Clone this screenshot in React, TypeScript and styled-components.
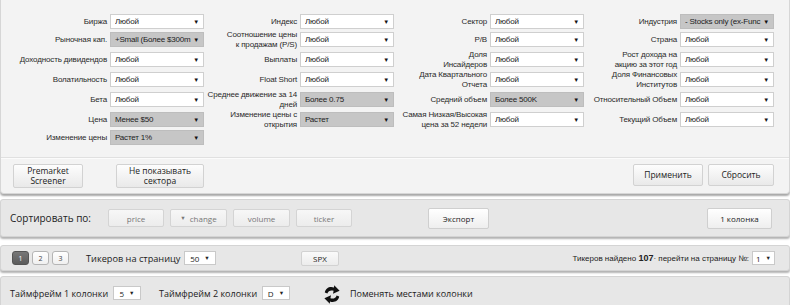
import React from "react";
import styled, { createGlobalStyle, css } from "styled-components";

const GlobalStyle = createGlobalStyle`
  html, body { margin: 0; padding: 0; background: #ffffff; }
  body { font-family: "Liberation Sans", Arial, sans-serif; color: #222; }
  * { box-sizing: border-box; }
`;

const Page = styled.div`
  width: 790px;
  display: flex;
  flex-direction: column;
`;

/* ---------- Filter panel ---------- */
const FilterPanel = styled.div`
  height: 194px;
  background: #f3f3f3;
  border: 1px solid #d6d6d6;
  border-top: none;
  border-radius: 0 0 4px 4px;
  box-shadow: 0 2px 2px rgba(0, 0, 0, 0.35);
  padding-top: 14px;
  display: flex;
  flex-direction: column;
`;

const FilterGrid = styled.div`
  display: grid;
  grid-template-columns: repeat(4, 90px 94px);
  column-gap: 3px;
  row-gap: 1px;
  align-items: center;
  padding-left: 16px;
`;

const Label = styled.div`
  display: flex;
  justify-content: flex-end;
  font-size: 8px;
  letter-spacing: -0.15px;
  line-height: 9.5px;
  color: #2a2a2a;
  text-align: right;
  white-space: nowrap;
`;

const Select = styled.div<{ $active?: boolean }>`
  height: 15px;
  border: 1px solid ${(p) => (p.$active ? "#bdbdbd" : "#cfcfcf")};
  background: ${(p) => (p.$active ? "#c6c6c6" : "#ffffff")};
  font-size: 8px;
  letter-spacing: -0.2px;
  color: #222;
  display: flex;
  align-items: center;
  padding: 0 4px 0 4px;
  overflow: hidden;
  white-space: nowrap;
`;

const SelectText = styled.span`
  overflow: hidden;
  text-overflow: clip;
  flex: 1;
  min-width: 0;
`;

const Arrow = styled.span`
  font-size: 6px;
  color: #111;
  margin-left: 2px;
  flex: none;
`;

const Divider = styled.div`
  margin: 12px 0 0;
  height: 2px;
  border-top: 1px solid #e0e0e0;
  border-bottom: 1px solid #fbfbfb;
`;

const ButtonRow = styled.div`
  display: flex;
  justify-content: space-between;
  padding: 5px 15px 0 12px;
`;

const ButtonGroup = styled.div<{ $gap: number }>`
  display: flex;
  gap: ${(p) => p.$gap}px;
  align-items: flex-start;
`;

const PanelButton = styled.button<{ $w: number; $h?: number }>`
  width: ${(p) => p.$w}px;
  height: ${(p) => p.$h ?? 24}px;
  border: 1px solid #d2d2d2;
  border-radius: 2px;
  background: linear-gradient(#fdfdfd, #e9e9e9);
  font-family: "Open Sans", "Liberation Sans", sans-serif;
  font-size: 8.5px;
  line-height: 10px;
  color: #222;
  padding: 0;
  cursor: pointer;
`;

/* ---------- Bars ---------- */
const Bar = styled.div<{ $h: number; $mt: number }>`
  margin-top: ${(p) => p.$mt}px;
  height: ${(p) => p.$h}px;
  background: #e7e7e7;
  border: 1px solid #d4d4d4;
  border-radius: 3px;
  box-shadow: 0 2px 2px rgba(0, 0, 0, 0.3);
  display: flex;
  align-items: center;
  font-family: "Open Sans", "Liberation Sans", sans-serif;
  color: #222;
`;

const BarText = styled.span<{ $size?: number; $ml?: number; $w?: number }>`
  font-size: ${(p) => p.$size ?? 9}px;
  margin-left: ${(p) => p.$ml ?? 0}px;
  ${(p) => p.$w !== undefined && css`width: ${p.$w}px; flex: none;`}
  white-space: nowrap;
`;

const SortButton = styled.button<{ $w: number; $strong?: boolean; $ml?: number; $mr?: number }>`
  width: ${(p) => p.$w}px;
  height: 18px;
  margin-left: ${(p) => p.$ml ?? 0}px;
  margin-right: ${(p) => p.$mr ?? 0}px;
  border: 1px solid #d4d4d4;
  border-radius: 2px;
  background: linear-gradient(#f7f7f7, #ececec);
  font-family: "Open Sans", "Liberation Sans", sans-serif;
  font-size: 8px;
  color: ${(p) => (p.$strong ? "#222" : "#777")};
  padding: 0;
  display: flex;
  align-items: center;
  justify-content: center;
  gap: 4px;
  ${(p) =>
    p.$strong &&
    css`
      height: 21px;
      background: linear-gradient(#ffffff, #eeeeee);
      border-color: #cfcfcf;
    `}
`;

const SortGroup = styled.div`
  display: flex;
  gap: 6px;
`;

const PageBtn = styled.span<{ $active?: boolean }>`
  width: 17px;
  height: 14px;
  border: 1px solid ${(p) => (p.$active ? "#555" : "#b5b5b5")};
  border-radius: 3px;
  background: ${(p) => (p.$active ? "linear-gradient(#777, #5c5c5c)" : "linear-gradient(#ffffff, #f0f0f0)")};
  color: ${(p) => (p.$active ? "#fff" : "#444")};
  font-size: 7px;
  display: flex;
  align-items: center;
  justify-content: center;
`;

const PageGroup = styled.div`
  display: flex;
  gap: 3px;
  margin-left: 11px;
`;

const MiniSelect = styled.span<{ $w: number; $ml?: number; $mr?: number }>`
  width: ${(p) => p.$w}px;
  height: 14px;
  margin-left: ${(p) => p.$ml ?? 2}px;
  margin-right: ${(p) => p.$mr ?? 0}px;
  border: 1px solid #c9c9c9;
  background: #fff;
  font-size: 8px;
  display: inline-flex;
  align-items: center;
  justify-content: center;
  gap: 5px;
  color: #222;
  flex: none;
`;

const MiniArrow = styled.span`
  font-size: 5.5px;
`;

const SmallButton = styled.span<{ $w: number; $ml: number }>`
  width: ${(p) => p.$w}px;
  height: 15px;
  margin-left: ${(p) => p.$ml}px;
  border: 1px solid #d2d2d2;
  border-radius: 2px;
  background: linear-gradient(#fafafa, #ececec);
  font-size: 8px;
  display: flex;
  align-items: center;
  justify-content: center;
  color: #222;
`;

const Spacer = styled.div`
  flex: 1;
`;

const FoundText = styled.span`
  font-family: "Liberation Sans", Arial, sans-serif;
  font-size: 8px;
  white-space: nowrap;
  color: #222;
  b { font-size: 9px; }
`;

const SwapIcon = styled.svg`
  width: 16px;
  height: 19px;
  margin-left: 34px;
  margin-top: 2px;
  flex: none;
`;

type Item = { label: React.ReactNode; value: string; active?: boolean };

const rows: Item[][] = [
  [
    { label: "Биржа", value: "Любой" },
    { label: "Индекс", value: "Любой" },
    { label: "Сектор", value: "Любой" },
    { label: "Индустрия", value: "- Stocks only (ex-Func", active: true },
  ],
  [
    { label: "Рыночная кап.", value: "+Small (Более $300m", active: true },
    { label: <>Соотношение цены<br />к продажам (P/S)</>, value: "Любой" },
    { label: "P/B", value: "Любой" },
    { label: "Страна", value: "Любой" },
  ],
  [
    { label: "Доходность дивидендов", value: "Любой" },
    { label: "Выплаты", value: "Любой" },
    { label: <>Доля<br />Инсайдеров</>, value: "Любой" },
    { label: <>Рост дохода на<br />акцию за этот год</>, value: "Любой" },
  ],
  [
    { label: "Волатильность", value: "Любой" },
    { label: "Float Short", value: "Любой" },
    { label: <>Дата Квартального<br />Отчета</>, value: "Любой" },
    { label: <>Доля Финансовых<br />Институтов</>, value: "Любой" },
  ],
  [
    { label: "Бета", value: "Любой" },
    { label: <>Среднее движение за 14<br />дней</>, value: "Более 0.75", active: true },
    { label: "Средний объем", value: "Более 500K", active: true },
    { label: "Относительный Объем", value: "Любой" },
  ],
  [
    { label: "Цена", value: "Менее $50", active: true },
    { label: <>Изменение цены с<br />открытия</>, value: "Растет", active: true },
    { label: <>Самая Низкая/Высокая<br />цена за 52 недели</>, value: "Любой" },
    { label: "Текущий Объем", value: "Любой" },
  ],
  [{ label: "Изменение цены", value: "Растет 1%", active: true }],
];

const FilterCell: React.FC<Item> = ({ label, value, active }) => (
  <>
    <Label><span>{label}</span></Label>
    <Select $active={active}>
      <SelectText>{value}</SelectText>
      <Arrow>▼</Arrow>
    </Select>
  </>
);

export default function App() {
  return (
    <>
      <GlobalStyle />
      <Page>
        <FilterPanel>
          <FilterGrid>
            {rows.map((r, i) =>
              r.map((it, j) => <FilterCell key={`${i}-${j}`} {...it} />)
            )}
          </FilterGrid>
          <Divider />
          <ButtonRow>
            <ButtonGroup $gap={33}>
              <PanelButton $w={70}>Premarket<br />Screener</PanelButton>
              <PanelButton $w={88}>Не показывать<br />сектора</PanelButton>
            </ButtonGroup>
            <ButtonGroup $gap={5}>
              <PanelButton $w={70} $h={22}>Применить</PanelButton>
              <PanelButton $w={66} $h={22}>Сбросить</PanelButton>
            </ButtonGroup>
          </ButtonRow>
        </FilterPanel>

        <Bar $h={38} $mt={5}>
          <BarText $ml={9} $w={98} $size={10}>Сортировать по:</BarText>
          <SortGroup>
            <SortButton $w={56}>price</SortButton>
            <SortButton $w={57}><MiniArrow>▼</MiniArrow>change</SortButton>
            <SortButton $w={57}>volume</SortButton>
            <SortButton $w={56}>ticker</SortButton>
          </SortGroup>
          <SortButton $w={61} $strong $ml={76}>Экспорт</SortButton>
          <Spacer />
          <SortButton $w={65} $strong $mr={17}>1 колонка</SortButton>
        </Bar>

        <Bar $h={26} $mt={8}>
          <PageGroup>
            <PageBtn $active>1</PageBtn>
            <PageBtn>2</PageBtn>
            <PageBtn>3</PageBtn>
          </PageGroup>
          <BarText $ml={17} $w={96} $size={9.2}>Тикеров на страницу</BarText>
          <MiniSelect $w={32}>50 <MiniArrow>▼</MiniArrow></MiniSelect>
          <SmallButton $w={38} $ml={85}>SPX</SmallButton>
          <Spacer />
          <FoundText>Тикеров найдено <b>107</b>· перейти на страницу №:</FoundText>
          <MiniSelect $w={23} $ml={3} $mr={14}>1 <MiniArrow>▼</MiniArrow></MiniSelect>
        </Bar>

        <Bar $h={34} $mt={5}>
          <BarText $ml={9} $w={102} $size={9}>Таймфрейм 1 колонки</BarText>
          <MiniSelect $w={28} $ml={1}>5 <MiniArrow>▼</MiniArrow></MiniSelect>
          <BarText $ml={18} $w={102} $size={9}>Таймфрейм 2 колонки</BarText>
          <MiniSelect $w={28} $ml={1}>D <MiniArrow>▼</MiniArrow></MiniSelect>
          <SwapIcon viewBox="0 0 16 19">
            <path d="M0.8 7.5 C1.5 3 6 1 10 2.6 L10.2 0.2 L15.6 5.8 L9 8.8 L9.6 5.8 C7 4.8 4.2 5.6 3.4 8.5 Z" fill="#111" />
            <path d="M15.2 11.5 C14.5 16 10 18 6 16.4 L5.8 18.8 L0.4 13.2 L7 10.2 L6.4 13.2 C9 14.2 11.8 13.4 12.6 10.5 Z" fill="#111" />
          </SwapIcon>
          <BarText $ml={10} $size={9}>Поменять местами колонки</BarText>
        </Bar>
      </Page>
    </>
  );
}
